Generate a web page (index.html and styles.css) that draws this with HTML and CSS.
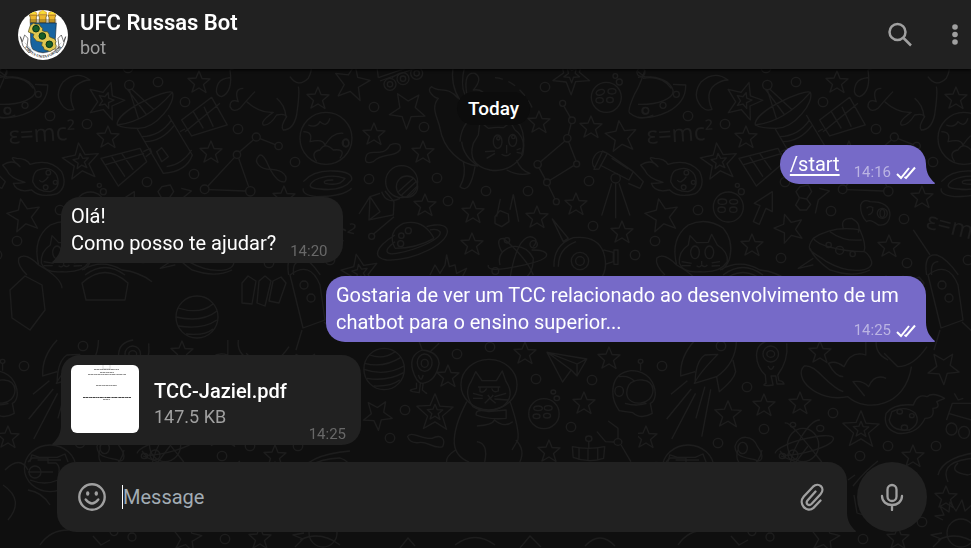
FILE: index.html
```html
<!DOCTYPE html>
<html lang="pt-BR">
<head>
<meta charset="utf-8">
<meta name="viewport" content="width=device-width, initial-scale=1">
<title>UFC Russas Bot</title>
<link rel="stylesheet" href="styles.css">
</head>
<body>
<svg class="wallpaper" aria-hidden="true">
  <defs>
    <path id="star" d="M0-11 3-3.500 11-3 4.500 2.500 7 10.500 0 6-7 10 -4.500 2.500 -11-3.500 -3-4Z"/>
    <g id="star2"><use href="#star" transform="scale(1.650)"/><use href="#star" transform="scale(.7)"/></g>
    <circle id="dot" r="4.700"/>
    <g id="art">
      <!-- scattered planets -->
      <use href="#dot" x="50" y="116"/><use href="#dot" x="158" y="82"/><use href="#dot" x="185" y="102"/><use href="#dot" x="87" y="124"/><use href="#dot" x="238" y="129"/><use href="#dot" x="295" y="162"/><use href="#dot" x="194" y="174"/><use href="#dot" x="147" y="182"/><use href="#dot" x="60" y="210"/><use href="#dot" x="17" y="241"/><use href="#dot" x="128" y="68"/>
      <use href="#dot" x="374" y="107"/><use href="#dot" x="424" y="127"/><use href="#dot" x="545" y="87"/><use href="#dot" x="369" y="179"/><use href="#dot" x="437" y="178"/><use href="#dot" x="448" y="201"/><use href="#dot" x="486" y="191"/><use href="#dot" x="528" y="191"/><use href="#dot" x="589" y="181"/><use href="#dot" x="593" y="226"/><use href="#dot" x="635" y="255"/>
      <use href="#dot" x="143" y="258"/><use href="#dot" x="193" y="211"/><use href="#dot" x="266" y="219"/><use href="#dot" x="269" y="263"/><use href="#dot" x="330" y="260"/>
      <use href="#dot" x="490" y="347"/><use href="#dot" x="457" y="354"/><use href="#dot" x="536" y="379"/><use href="#dot" x="592" y="380"/><use href="#dot" x="405" y="410"/><use href="#dot" x="571" y="427"/><use href="#dot" x="390" y="438"/><use href="#dot" x="24" y="366"/><use href="#dot" x="83" y="346"/><use href="#dot" x="109" y="387"/><use href="#dot" x="195" y="413"/><use href="#dot" x="126" y="429"/><use href="#dot" x="80" y="443"/><use href="#dot" x="250" y="446"/><use href="#dot" x="298" y="446"/><use href="#dot" x="222" y="456"/><use href="#dot" x="284" y="522"/><use href="#dot" x="225" y="539"/>
      <!-- stars -->
      <use href="#star" x="199" y="82"/><use href="#star" x="108" y="137"/><use href="#star" x="211" y="152"/><use href="#star" x="318" y="98"/><use href="#star" x="284" y="197"/><use href="#star" x="374" y="134"/><use href="#star" x="423" y="152"/><use href="#star" x="539" y="122"/><use href="#star" x="591" y="127"/><use href="#star" x="576" y="204"/><use href="#star" x="622" y="232"/><use href="#star" x="537" y="217"/><use href="#star" x="473" y="212"/><use href="#star" x="425" y="205"/><use href="#star" x="472" y="244"/><use href="#star" x="114" y="245"/><use href="#star" x="251" y="246"/><use href="#star" x="525" y="353"/><use href="#star" x="609" y="358"/><use href="#star" x="448" y="376"/><use href="#star" x="584" y="403"/><use href="#star" x="549" y="451"/><use href="#star" x="8" y="437"/><use href="#star" x="126" y="405"/><use href="#star" x="162" y="403"/><use href="#star" x="182" y="352"/><use href="#star" x="275" y="456"/><use href="#star" x="308" y="497"/><use href="#star" x="260" y="538"/>
      <use href="#star" transform="translate(24 215) rotate(-12) scale(1.500)"/><use href="#star" transform="translate(352 82) rotate(10) scale(1.600)"/><use href="#star" transform="translate(408 109) rotate(38) scale(1.600)"/><use href="#star" transform="translate(621 136) rotate(-8) scale(1.400)"/><use href="#star" transform="translate(151 228) rotate(-18) scale(1.300)"/><use href="#star" transform="translate(378 414) rotate(32) scale(1.300)"/><use href="#star" transform="translate(90 414) scale(1.200)"/><use href="#star" transform="translate(306 367) rotate(34) scale(1.400)"/><use href="#star" transform="translate(187 537) rotate(10) scale(1.300)"/>
      <use href="#star2" transform="translate(106 100) rotate(16)"/><use href="#star2" transform="translate(81 161) rotate(-8)"/><use href="#star2" transform="translate(572 74) rotate(36)"/><use href="#star2" transform="translate(360 272) rotate(-12)"/><use href="#star2" transform="translate(435 412)"/><use href="#star2" transform="translate(223 429)"/>
      <!-- saucer, moon, satellite, comet, walking dog, globe -->
      <g transform="translate(0 65) scale(.3333)">
        <path d="M-30 60Q-20 35 20 35 90 35 105 75C110 100 60 120 0 118M105 58 143 60Q145 110 90 140 40 165-20 155M15 40Q70 30 100 70M0 20 20 35"/>
        <circle cx="115" cy="88" r="9"/><circle cx="75" cy="121" r="9"/><circle cx="23" cy="137" r="9"/>
        <path d="M270 45Q230 15 190 50 160 90 190 125 205 140 222 133 200 85 230 60 250 45 270 45Z"/>
        <circle cx="388" cy="60" r="14"/>
        <path d="M388 74 415 160M395 72 463 135M383 74 440 150M352 180C345 140 500 70 517 82 530 110 470 190 415 190 380 190 360 185 352 180ZM352 180Q440 170 517 82M412 192 490 325 Q560 320 577 270L505 150M425 215Q480 215 515 165M435 230Q485 230 522 182M545 165 635 97 682 180 575 213ZM555 200 660 115M580 140 610 190M612 125 640 185M303 280 420 250 440 290 355 363ZM315 300 432 265M335 275 375 335M365 265 400 315M430 260 450 250 455 262 437 275M540 200 555 192M470 260 485 248 505 275 485 290ZM500 305Q545 300 575 255"/>
        <path d="M8 300Q40 280 60 305 20 270 50 280 80 280 90 298 150 280 185 320 205 365 170 387 120 400 95 375 50 385 40 355 60 355 75 352 30 340 20 315Z"/><path d="M115 315Q150 300 170 330 185 370 150 380 110 380 98 350 100 320 115 315Z"/><circle cx="145" cy="323" r="7"/><circle cx="166" cy="352" r="6"/><circle cx="137" cy="367" r="7"/><path d="M118 345Q128 360 145 335"/>
        <path d="M690 15Q700 80 665 95 640 90 655 55 665 40 690 38M730 70Q700 70 715 110 690 100 690 125 700 145 720 130 750 95 765 80M740 110Q780 145 820 142 780 170 790 180 810 182 830 150 855 145 860 155 840 185 850 195 880 195 890 150 900 80 895 65M830 100Q855 120 858 155M870 35Q895 70 925 40 940 10 930 0M690 15Q720 0 760 0"/>
        <circle cx="978" cy="220" r="78"/><path d="M925 180Q950 190 960 170 980 190 990 160M910 200Q940 200 930 230 970 220 975 240 1000 200 1030 205M950 290Q930 260 960 255 975 230 1000 255 1040 250 1020 280"/><ellipse cx="1038" cy="234" rx="8" ry="12"/>
        <!-- constellation and figure eight -->
        <circle cx="769" cy="216" r="12"/><circle cx="836" cy="243" r="11"/><circle cx="711" cy="269" r="11"/><circle cx="614" cy="373" r="13"/><circle cx="751" cy="379" r="14"/>
        <path d="M780 221 826 239M760 225 719 260M703 278 624 363M716 280 746 365M627 374 737 378M775 275C760 290 780 315 815 313 850 315 865 335 855 350 835 355 815 325 800 290 790 270 780 265 775 275Z"/>
        <!-- galaxy -->
        <path d="M910 350Q940 315 1000 318 1060 320 1055 345 1030 380 960 372 910 370 945 345 990 325 1035 340 1020 365 975 355 965 345 1000 345M910 370Q905 390 950 395 1030 395 1055 370"/>
      </g>
      <text x="9" y="144" transform="rotate(-4 9 144)">ε=mc²</text>
      <text x="287" y="228" transform="rotate(14 287 228)">ε=mc²</text>
      <!-- button moon, arrow, molecule, capsule, mask, cat -->
      <g transform="translate(2 65) scale(.3333)">
        <circle cx="265" cy="426" r="45"/><ellipse cx="247" cy="410" rx="13" ry="8"/><ellipse cx="281" cy="410" rx="12" ry="7"/><ellipse cx="245" cy="434" rx="11" ry="8"/><ellipse cx="280" cy="434" rx="11" ry="8"/><circle cx="304" cy="380" r="9"/><circle cx="292" cy="361" r="6"/>
        <path d="M397 380 343 415 360 422 340 470 358 478 378 430 397 440ZM480 365 505 360 515 380 500 402 478 398 468 380ZM478 400 467 420 480 435 500 435 512 418 500 402M538 370 568 378 535 405 526 445M662 420Q670 400 690 410 750 410 750 450 745 485 715 480 690 460 680 470 660 450 662 420ZM680 430Q690 420 700 430M685 450Q700 445 698 430"/><circle cx="727" cy="445" r="15"/><ellipse cx="727" cy="445" rx="7" ry="12"/>
        <path d="M520 520Q580 480 660 495 680 540 672 560M520 520C490 560 520 560 560 590 630 630 700 620 695 590 690 570 675 560 672 560 600 560 530 540 520 520ZM510 550Q520 580 570 615 640 640 690 615M520 580 475 610 520 600M570 500Q610 530 665 525M610 490Q600 460 635 460 665 475 655 503"/><circle cx="566" cy="540" r="8"/><circle cx="599" cy="556" r="12"/><circle cx="638" cy="567" r="8"/>
        <path d="M110 600Q90 520 145 480 200 455 250 490 280 525 270 575 265 600 245 615M118 595Q115 560 145 540L150 512 170 533 205 532 215 508 232 540Q265 560 262 590 240 625 180 620 130 625 118 595ZM75 630Q45 600 50 580 70 560 110 600 180 640 180 670M240 615Q300 580 360 615 410 620 450 650"/><ellipse cx="165" cy="562" rx="13" ry="19"/><ellipse cx="208" cy="562" rx="13" ry="19"/><path d="M185 588V598M170 602Q180 610 185 600 195 610 202 600M125 590 155 595M125 602 152 602M240 590 215 594M240 602 215 603M820 495 870 570M860 630Q850 565 890 570 920 580 955 630M875 630Q870 590 895 590"/>
      </g>
      <!-- buggy, flying cat, telescope, astronaut tools, saturn -->
      <g transform="translate(320 65) scale(.3333)">
        <circle cx="210" cy="58" r="18"/><circle cx="210" cy="58" r="8"/><circle cx="249" cy="41" r="18"/><circle cx="249" cy="41" r="8"/><circle cx="290" cy="25" r="18"/><circle cx="290" cy="25" r="8"/><path d="M175 38 300-5M180 48 300 5M175 38 170 0M215 38 240 24"/>
        <path d="M400 0Q390 60 420 105M415 100C380 60 360 85 335 65 315 75 345 100 355 100 330 130 355 160 360 190 370 250 420 300 475 303M440 85Q430 20 465 25 490 40 460 75 490 70 500 100M435 0Q420 60 435 90M420 230Q425 165 480 150 550 140 600 180 620 220 605 270M425 230Q430 275 475 303M430 290Q440 330 420 365 450 390 465 305M590 285Q600 315 630 325 600 335 560 315"/>
        <path d="M475 210 480 170 505 190Q530 185 550 188L572 172 585 195Q620 220 608 270 570 325 510 315 440 300 460 235Z"/><ellipse cx="533" cy="230" rx="13" ry="20"/><ellipse cx="578" cy="226" rx="12" ry="18"/><circle cx="535" cy="220" r="5"/><circle cx="580" cy="216" r="5"/><path d="M560 240V265M545 268Q560 278 572 265M495 260 525 258M500 280 525 265M590 255 602 250M590 262 605 265"/><path stroke-dasharray="8 6" d="M525 38Q600 45 645 145"/>
        <circle cx="859" cy="97" r="45"/><ellipse cx="841" cy="82" rx="13" ry="8" transform="rotate(-20 841 82)"/><ellipse cx="876" cy="79" rx="12" ry="8"/><ellipse cx="839" cy="106" rx="11" ry="8"/><ellipse cx="870" cy="105" rx="10" ry="8"/><circle cx="898" cy="51" r="9"/><circle cx="886" cy="33" r="7"/>
        <circle cx="728" cy="115" r="9"/><circle cx="756" cy="166" r="10"/><circle cx="742" cy="220" r="11"/><circle cx="653" cy="298" r="11"/><circle cx="770" cy="297" r="9"/><circle cx="681" cy="352" r="10"/><circle cx="709" cy="410" r="9"/><path d="M732 124 751 157M753 177 745 209M734 229 662 290M746 231 768 287M657 308 676 343M690 346 761 302M685 361 705 402"/>
        <circle cx="77" cy="234" r="10"/><path d="M140 270C150 250 190 280 210 240 235 230 245 240 240 255 220 280 190 260 160 290 130 300 135 280 140 270Z"/>
        <circle cx="245" cy="350" r="48"/><circle cx="261" cy="365" r="32"/><path d="M235 380 280 340M245 390 288 350M260 395 290 365M185 380Q200 420 240 400M180 385 150 395 117 447M150 395 147 465 220 450 222 410 195 378M150 395 180 440 147 465M222 455 160 508"/><circle cx="155" cy="514" r="9"/>
        <path d="M225 550Q200 500 250 475 310 460 342 520M225 510C160 550 160 580 200 585 280 590 400 530 380 490 365 470 320 485 320 485M225 530C185 560 200 570 230 565 290 555 370 520 360 500 350 490 330 495 330 495M225 550Q290 550 342 520"/><circle cx="244" cy="512" r="8"/><circle cx="265" cy="497" r="9"/><circle cx="242" cy="536" r="9"/>
        <path d="M525 455 540 437 565 447 567 470 545 485 525 475ZM541 402 530 455M580 388 570 435M580 388 596 470"/>
        <path d="M825 310C805 290 830 250 855 262M862 265 848 258 822 313 837 312ZM862 265 940 320 927 345 840 300M940 320 970 350 960 370 925 355M875 280 925 312M875 355 845 452M887 355V460M897 355 930 452"/><circle cx="887" cy="340" r="14"/>
        <path d="M540 600Q530 560 575 545 620 540 640 580 640 640 590 650M545 560Q525 520 550 520 620 580 640 630M505 600Q500 620 560 610 680 590 680 570 680 555 635 555M640 545Q660 520 630 515 590 520 570 640"/><circle cx="561" cy="526" r="8"/><circle cx="641" cy="538" r="11"/><circle cx="526" cy="618" r="10"/>
        <path d="M702 605Q700 540 760 518 830 510 850 560 870 620 830 655M715 605Q715 550 768 530M697 462 745 520 730 530ZM850 555 880 562V590L855 598M882 555H894V598H882ZM330 630 345 600 360 625 375 600 380 570 388 605 405 600 410 625 440 610 425 640"/><circle cx="780" cy="588" r="26"/><circle cx="780" cy="588" r="13"/>
        <path d="M975 15Q960 60 945 85 920 140 930 145 960 170 1000 150"/><circle cx="963" cy="22" r="12"/><circle cx="976" cy="137" r="10"/>
      </g>
      <!-- striped planets and sun -->
      <circle cx="197" cy="317" r="21"/><path d="M178 308Q200 315 213 304M176 317Q202 323 217 311M178 326Q202 330 217 320M186 334Q205 336 213 329"/>
      <circle cx="323" cy="533" r="14"/><path d="m305 520-8-4 9-1-4-9 9 6 1-10 6 9 6-11 3 11 9-8-1 11 10-4-5 9 9 5M304 533l-11 2 10 4-8 8"/>
      <path d="M242 283 248 276 256 281 252 304 242 303ZM259 281 265 276 271 281 265 306 257 303ZM273 281 281 277 286 283 279 303 269 301ZM85 275Q105 260 125 275M82 283Q105 262 128 283L125 300H86ZM10 290 25 276 42 285 45 310 30 330 12 318ZM290 275Q310 260 320 285L325 320 303 328ZM302 330 296 350M324 322 338 335"/><circle cx="304" cy="285" r="4"/><circle cx="311" cy="298" r="4"/>
      <!-- alien, grumpy cat, paper plane, helmet, rocket -->
      <g transform="translate(360 340) scale(.3897 .3333)">
        <ellipse cx="62" cy="87" rx="52" ry="62"/><path d="M25 45Q60 60 90 35M12 70Q60 85 105 52M10 88Q65 110 113 78M18 115Q70 125 112 98M35 138Q80 140 102 120"/>
        <path d="M150 0 160 30Q125 45 135 90 145 130 160 130 195 125 203 70 200 35 160 30M180 35 203 10M145 128V145Q120 150 135 155L152 158 155 130M162 130 160 150Q175 165 170 158"/><ellipse cx="166" cy="68" rx="19" ry="26"/><ellipse cx="166" cy="70" rx="9" ry="12"/><path d="M150 105Q157 130 162 105"/>
        <ellipse cx="331" cy="134" rx="72" ry="76"/><path d="M285 125 297 95 313 122H350L365 93 375 125Q400 170 365 200 325 225 290 200 265 160 285 125ZM303 141H360M308 143V155Q318 160 325 145M338 145Q342 160 355 153V143M328 165 335 175 342 165M320 190 333 175 348 190M290 160 315 168M290 175 315 175M345 170 375 160M345 177 380 180M274 185Q240 260 242 310 245 350 280 366M385 185Q410 270 405 300L390 330M298 225Q295 205 330 215L375 210V235Q330 240 298 225ZM300 258Q340 255 345 240 370 265 392 245M300 305Q330 310 320 366M400 300Q425 330 410 366M245 330Q220 350 222 366"/>
        <path d="M480 37 582 57 557 108 542 90 520 126ZM480 37 542 90M480 37 557 72 557 108M582 57 557 72"/>
        <ellipse cx="472" cy="221" rx="39" ry="45"/><ellipse cx="457" cy="205" rx="11" ry="7"/><ellipse cx="483" cy="204" rx="10" ry="7"/><ellipse cx="453" cy="229" rx="9" ry="7"/><ellipse cx="480" cy="227" rx="9" ry="7"/><circle cx="505" cy="175" r="7"/><circle cx="496" cy="156" r="6"/>
        <path d="M665 212C640 170 640 100 695 92 760 90 770 180 745 190L750 220Q720 240 700 218 680 215 665 212ZM690 135C700 115 750 110 752 150 750 200 690 200 685 165 683 150 690 135 690 135ZM665 110Q690 105 705 125M680 190Q710 200 735 190M720 70V92"/><circle cx="720" cy="64" r="6"/><ellipse cx="665" cy="154" rx="11" ry="15"/>
        <path d="M860 0Q820 50 823 108L860 95M860 130Q860 65 885 45L918 43Q870 100 858 130L915 110Q965 70 966 0M915 110 922 155Q960 120 964 95L957 60M840 122 798 163M850 147 787 237M861 160 800 297M885 140 862 235M900 148 877 290"/>
        <path d="M1055 0C1000 10 1015 80 1040 105L1042 130Q1025 140 1060 135L1055 108H1067L1070 132H1088Q1085 122 1075 122L1072 105Q1100 60 1095 10"/><ellipse cx="1054" cy="42" rx="20" ry="24"/><circle cx="1054" cy="42" r="10"/><path d="M1047 78Q1055 98 1062 78"/>
        <path d="M1298 0V45Q1260 30 1242 80 1220 60 1202 70 1220 110 1240 110M1240 155C1200 140 1170 70 1140 78 1110 110 1170 190 1252 170 1300 220 1400 200 1415 80M1295 168 1265 125Q1290 120 1305 140 1320 100 1350 115M1345 40 1380 80Q1420 80 1455 20M1325 0Q1320 40 1355 60"/>
        <path d="M1500 175Q1470 155 1455 170 1430 160 1420 195 1370 190 1350 220 1340 265 1380 280 1430 285 1450 235 1475 235 1470 205 1490 205 1480 185Z"/><path d="M1365 215Q1400 195 1425 220 1440 250 1410 270 1365 275 1358 240Z"/><circle cx="1385" cy="215" r="7"/><circle cx="1416" cy="227" r="6"/><circle cx="1397" cy="263" r="8"/>
        <ellipse cx="1518" cy="267" rx="14" ry="18"/><ellipse cx="1550" cy="277" rx="14" ry="18"/><path d="M1505 240 1520 190H1568M1510 220 1568 240M1525 160 1535 180 1548 175"/>
        <path d="M545 320Q585 330 628 320L625 355Q585 370 547 352ZM562 325V360M585 328V362M610 325V358M587 303V325M637 243 662 265V297M608 275 630 305 652 306M670 315 695 365"/><circle cx="587" cy="296" r="8"/><circle cx="662" cy="306" r="10"/>
        <ellipse cx="842" cy="385" rx="66" ry="70"/><path d="M790 366 795 345 815 352H860L880 342 888 366M810 360H870M962 320C970 280 1010 285 1020 320 1040 350 1030 370 1015 360 980 350 965 350 962 320Z"/><ellipse cx="982" cy="324" rx="12" ry="17"/><path d="M1090 250C1100 240 1140 300 1185 366M1180 240C1150 240 1110 330 1105 366M1065 340C1070 310 1210 270 1215 295 1215 320 1130 345 1090 346"/><ellipse cx="1137" cy="315" rx="40" ry="50"/><circle cx="1111" cy="254" r="7"/><circle cx="1181" cy="265" r="9"/><circle cx="1084" cy="348" r="8"/>
        <path d="M122 290C130 270 160 300 185 295 210 280 220 300 212 320 190 330 170 300 150 308 130 310 125 300 122 290Z"/>
      </g>
      <!-- dog in a helmet, lower galaxy, probe, bottom edge -->
      <path d="M28 462 32 458H48V463H56Q60 466 59 472V480M28 472H53M30 480Q45 486 58 480M28 490Q42 492 50 505M100 450Q95 465 112 467 122 462 124 450M143 456 158 462 170 446M147 457 142 451M40 545Q50 530 68 530 70 520 85 520M93 536 101 545 110 540M110 532A4 4 0 1 0 110 531M5 470Q20 455 28 470M3 485Q25 500 8 520M848 480 855 475M215 486Q228 470 240 461M216 495 219 513 232 517M300 475Q305 455 350 451M310 482Q300 460 340 458 360 465 330 475 310 472 320 463 340 460M330 545 345 530"/>
      <circle cx="132" cy="537" r="4"/><circle cx="35" cy="472" r="6"/><circle cx="155" cy="455" r="5"/>
      <path d="M300 540Q320 530 340 545M400 548 408 538 415 546M455 545Q475 530 495 545M520 548 530 536 541 547M585 546Q600 530 615 546"/>
    </g>
    <pattern id="space" width="638" height="548" patternUnits="userSpaceOnUse">
      <use href="#art"/><use href="#art" x="-638"/>
    </pattern>
  </defs>
  <rect width="100%" height="100%" fill="url(#space)"/>
</svg>

<header class="topbar">
  <svg class="avatar" viewBox="0 0 150 150" role="img" aria-label="Brasão da UFC">
    <defs><clipPath id="round"><circle cx="75" cy="75" r="75"/></clipPath></defs>
    <g clip-path="url(#round)">
      <rect width="150" height="150" fill="#fff"/>
      <g fill="#edb72c" stroke="#5b4917" stroke-width="2">
        <path d="M37 38V23l-3-8h24l-3 8v15zM64 38V22l-3-8h26l-3 8v16zM93 38V23l-3-8h24l-3 8v15z"/>
        <path d="M35 30h80M35 36h80" />
      </g>
      <path fill="#f6df35" stroke="#dc8d22" stroke-width="2" d="M36 14q-2-9 6-7 4-10 9 0 8 0 5 7zM63 13q-2-9 6-8 5-10 11 0 8 0 5 8zM92 14q-2-9 6-7 4-10 9 0 8 0 5 7z"/>
      <path fill="#fff" stroke="#333" stroke-width="2" d="M7 80 13 95 20 75 30 85 27 111 39 121 33 129 15 108ZM143 80 137 95 130 75 120 85 123 111 111 121 117 129 135 108Z"/>
      <path fill="#1764a0" stroke="#152c40" stroke-width="2" d="M37 39h78l-3 46q1 24-7 33-14 9-30 10-16-1-30-10-8-10-7-33z"/>
      <path fill="#e0c650" stroke="#4e4b18" stroke-width="2" d="m37 47 9-7 8 3 9-1 5 8 6 5-1 7 8 3 7 0 5 7 1 8 8 4 7 2 5 8-2 7 3 7-3 8-9 4-7 5-9-4-8-2-3-8-5-5 2-9-9-2-9-2-5-7-5-5 3-8-9-4-8-3 2-8z"/>
      <g fill="#175c27" stroke="#08331b" stroke-width="3"><circle cx="54" cy="56" r="10"/><circle cx="73" cy="78" r="10"/><circle cx="94" cy="103" r="10"/></g>
      <path id="motto-line" fill="none" d="M19 111Q75 176 131 111"/>
      <path fill="none" stroke="#777" stroke-width="1" d="M20 98Q75 160 130 98"/>
      <text class="motto"><textPath href="#motto-line" startOffset="50%" text-anchor="middle">VIRTUS UNITA FORTIOR</textPath></text>
    </g>
  </svg>
  <div class="peer">
    <h1 class="peer-name">UFC Russas Bot</h1>
    <p class="peer-status">bot</p>
  </div>
  <button class="icon-button" type="button" aria-label="Search">
    <svg width="26" height="26" viewBox="0 0 26 26" fill="none" stroke="currentColor" stroke-width="2.500"><circle cx="10.500" cy="10" r="8"/><path d="m16.500 16 7.500 7.500"/></svg>
  </button>
  <button class="icon-button more" type="button" aria-label="More actions">
    <svg width="6" height="22" viewBox="0 0 6 22" fill="currentColor"><circle cx="3" cy="3" r="2.800"/><circle cx="3" cy="10.500" r="2.800"/><circle cx="3" cy="18" r="2.800"/></svg>
  </button>
</header>

<main class="chat">
  <p class="day"><time>Today</time></p>
  <article class="bubble own">
    <a class="command" href="#start">/start</a>
    <span class="meta"><time>14:16</time><svg class="ticks" viewBox="0 0 20 14" role="img" aria-label="Read"><path d="m1 8 4 4 8-10M8.500 11l1.500 1L19 1.500"/></svg></span>
  </article>
  <article class="bubble">
    Olá!<br>Como posso te ajudar?
    <span class="meta"><time>14:20</time></span>
  </article>
  <article class="bubble own">
    <span>Gostaria de ver um TCC relacionado ao desenvolvimento de um</span>
    <span>chatbot para o ensino superior...</span>
    <span class="meta"><time>14:25</time><svg class="ticks" viewBox="0 0 20 14" role="img" aria-label="Read"><path d="m1 8 4 4 8-10M8.500 11l1.500 1L19 1.500"/></svg></span>
  </article>
  <article class="bubble document">
    <svg class="thumb" viewBox="0 0 68 68" role="img" aria-label="Document preview">
      <rect width="68" height="68" fill="#fff"/>
      <path fill="none" stroke="#ccc" stroke-width=".7" d="M32 0v4h7V0"/>
      <g fill="none" stroke="#777" stroke-width=".8" stroke-dasharray="2 .4 3 .5 1 .3"><path d="M23 4.500h25M29 7.500h14M17 9.500h38M25 20.500h21M32 34.500h7"/><path stroke="#444" stroke-width="1" d="M12 32.500h48"/></g>
    </svg>
    <div class="file">
      <a class="file-name" href="#file">TCC-Jaziel.pdf</a>
      <span class="file-size">147.5 KB</span>
    </div>
    <span class="meta"><time>14:25</time></span>
  </article>
</main>

<form class="composer">
  <div class="field">
    <button class="icon-button" type="button" aria-label="Emoji">
      <svg width="28" height="28" viewBox="0 0 28 28" fill="none" stroke="currentColor" stroke-width="2.400" stroke-linecap="round"><circle cx="14" cy="14" r="12.700"/><path d="M7.700 16.500q6.300 8 12.600 0"/><g fill="currentColor" stroke="none"><ellipse cx="9.700" cy="10.500" rx="1.700" ry="2.200"/><ellipse cx="18.300" cy="10.500" rx="1.700" ry="2.200"/></g></svg>
    </button>
    <span class="caret"></span>
    <input class="message" type="text" placeholder="Message" aria-label="Message">
    <button class="icon-button" type="button" aria-label="Attach file">
      <svg width="24" height="28" viewBox="0 0 24 28" fill="none" stroke="currentColor" stroke-width="2.300" stroke-linecap="round"><path d="M15.500 8.500 7.700 17.200c-3 3.500 1.200 6.300 4 3.500l8.800-9.400C26 5 18.500-1.500 13 3.700L3.800 13.500C-2.500 21 7 30.500 13.500 24.800l7-7.300"/></svg>
    </button>
  </div>
  <button class="record" type="button" aria-label="Record voice message">
    <svg width="24" height="28" viewBox="0 0 24 28" fill="none" stroke="currentColor" stroke-width="2.300" stroke-linecap="round"><rect x="7.500" y="2" width="9" height="16" rx="4.500"/><path d="M2 13c0 12 20 12 20 0M12 22.500V27"/></svg>
  </button>
</form>
</body>
</html>
```
FILE: styles.css
```css
:root {
  --surface: #212121;
  --own: #766ac8;
  --muted: #a0a0a0;
  --tail-right: path("M0 0C0 9 4 15 9 19Q9 20 8 20H0Z");
  --tail-left: path("M9 0C9 9 5 15 0 19Q0 20 1 20H9Z");
}

* { box-sizing: border-box; }

body {
  display: flex;
  flex-direction: column;
  min-height: 100vh;
  margin: 0;
  background: #0f0f0f;
  color: #fff;
  font: 20px/27px Roboto, sans-serif;
}

h1, p { margin: 0; }

button {
  padding: 0;
  border: 0;
  background: none;
  color: var(--muted);
}

svg { display: block; }

.wallpaper {
  position: fixed;
  inset: 0;
  z-index: -1;
  width: 100%;
  height: 100%;
  fill: none;
  stroke: #1d1d1d;
  stroke-width: 1.3px;
  stroke-linejoin: round;
}

.wallpaper path,
.wallpaper circle,
.wallpaper ellipse { vector-effect: non-scaling-stroke; }

.wallpaper rect { stroke: none; }

.wallpaper text {
  fill: #1d1d1d;
  stroke: none;
  font: 24px "Open Sans", sans-serif;
}

.topbar {
  display: flex;
  align-items: center;
  height: 69px;
  padding: 0 13px 0 18px;
  background: var(--surface);
  box-shadow: 0 1px 3px #000;
}

.avatar {
  width: 50px;
  height: 50px;
}

.motto {
  fill: #222;
  font: bold 11px "Liberation Serif", serif;
}

.peer {
  flex: 1;
  padding-left: 12px;
}

.peer-name {
  font-size: 22px;
  font-weight: 600;
  line-height: 27px;
}

.peer-status {
  color: var(--muted);
  font-size: 18px;
  line-height: 24px;
}

.more { margin-left: 39px; }

.chat {
  display: flex;
  flex: 1;
  flex-direction: column;
  align-items: flex-start;
  gap: 13px;
  padding: 23px 45px 17px 61px;
}

.day {
  align-self: center;
  margin-bottom: 7px;
  padding: 3px 11px;
  border-radius: 17px;
  background: #0c0c0c;
  font-size: 19px;
  font-weight: 500;
}

.bubble {
  position: relative;
  max-width: 600px;
  padding: 6px 10px;
  border-radius: 19px 19px 19px 0;
  background: var(--surface);
}

.bubble::after,
.field::after {
  content: "";
  position: absolute;
  bottom: 0;
  width: 9px;
  height: 20px;
  background: inherit;
}

.bubble::after {
  right: 100%;
  clip-path: var(--tail-left);
}

.bubble.own {
  align-self: flex-end;
  border-radius: 19px 19px 0 19px;
  background: var(--own);
}

.bubble.own::after,
.field::after {
  right: auto;
  left: 100%;
  clip-path: var(--tail-right);
}

.command {
  color: inherit;
  text-underline-offset: 3px;
}

.meta {
  display: flex;
  float: right;
  align-items: center;
  gap: 5px;
  height: 27px;
  margin: 0 5px 0 14px;
  padding-top: 16px;
  color: #686868;
  font-size: 15px;
}

.own .meta {
  margin-right: 0;
  color: #bbb4e3;
}

.ticks {
  width: 20px;
  height: 14px;
  fill: none;
  stroke: #fff;
  stroke-width: 2px;
}

.document {
  display: flex;
  min-width: 300px;
  padding: 10px 10px 12px;
}

.thumb {
  width: 68px;
  height: 68px;
  border-radius: 6px;
}

.file {
  flex: 1;
  padding: 13px 0 0 15px;
}

.file-name {
  display: block;
  color: #fff;
  font-weight: 500;
  text-decoration: none;
}

.file-size {
  display: block;
  color: var(--muted);
  font-size: 18px;
  line-height: 23px;
}

.document .meta {
  align-self: flex-end;
  margin-bottom: -7px;
}

.composer {
  display: flex;
  gap: 10px;
  padding: 0 44px 16px 57px;
}

.field {
  position: relative;
  display: flex;
  flex: 1;
  align-items: center;
  height: 70px;
  padding: 0 23px 0 21px;
  border-radius: 19px 19px 0 19px;
  background: var(--surface);
}

.caret {
  width: 1px;
  height: 24px;
  margin-left: 16px;
  background: #fff;
}

.message {
  flex: 1;
  min-width: 0;
  padding: 0;
  border: 0;
  outline: 0;
  background: none;
  color: #fff;
  font: inherit;
}

.message::placeholder {
  color: #a2acb4;
  opacity: 1;
}

.record {
  display: grid;
  place-items: center;
  width: 70px;
  height: 70px;
  border-radius: 50%;
  background: var(--surface);
}
```
